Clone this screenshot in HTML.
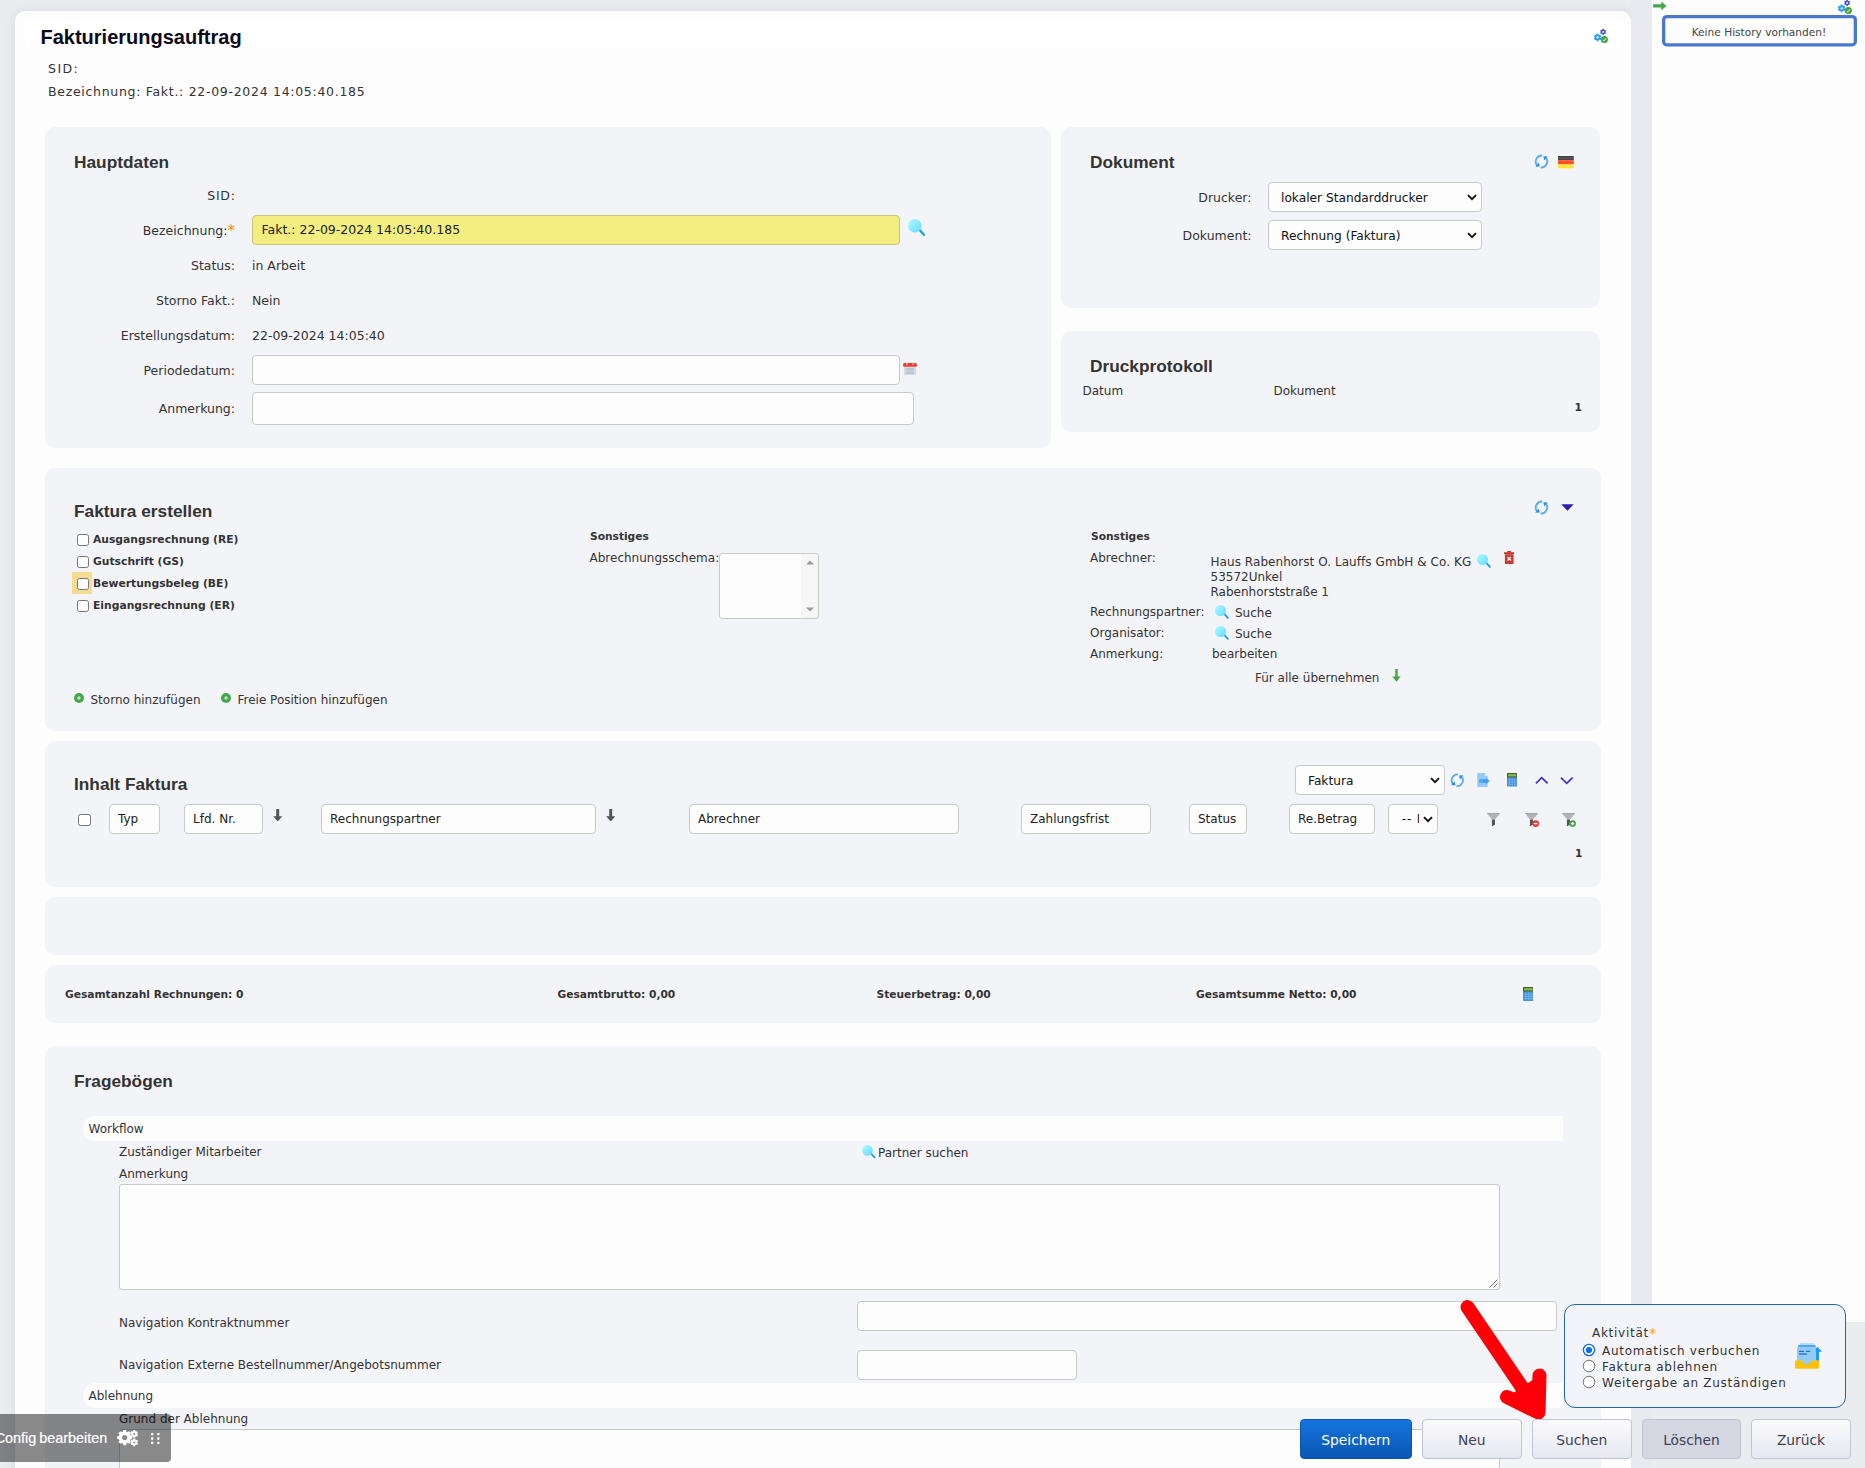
<!DOCTYPE html><html lang="de"><head><meta charset="utf-8"><title>Fakturierungsauftrag</title><style>
*{box-sizing:border-box;margin:0;padding:0}
html,body{width:1865px;height:1468px;overflow:hidden}
body{background:#ebecf0;font-family:"DejaVu Sans","Liberation Sans",sans-serif;color:#333;position:relative}
.b{position:absolute}
.t{position:absolute;white-space:nowrap;line-height:20px;height:20px}
.h{font-family:"Liberation Sans",sans-serif;font-weight:bold;color:#333}
.bd{font-weight:bold}
.main{background:#fdfdfd;border-radius:10px 10px 0 0;box-shadow:0 0 10px rgba(90,95,130,.13)}
.pn{background:#f3f4f8;border-radius:10px}
.in{background:#fdfdfd;border:1px solid #c9c9c9;border-radius:4px}
.cb{background:#fff;border:1px solid #767676;border-radius:2.5px}
.rd{background:#fff;border:1px solid #767676;border-radius:50%}
.btn{border:1px solid #c3c6d2;border-radius:4px;background:linear-gradient(#fbfbfd,#e6e8ef);color:#3d4252;text-align:center;font-size:13.8px;line-height:40px}
.bar{background:#fdfdfd;border-radius:12px 0 0 12px}
</style></head><body>
<div class="b " style="left:1652px;top:0px;width:213px;height:1322px;background:#fdfdfd"></div>
<div class="b " style="left:1631px;top:0px;width:21px;height:1468px;background:#e9eaef"></div>
<div class="b main" style="left:15px;top:11px;width:1616px;height:1469px;"></div>
<div class="b " style="left:25px;top:21px;width:1597px;height:28px;background:#fff;border-radius:4px"></div>
<div class="t h" style="left:40.5px;top:26.67px;font-size:20px;color:#0a0a1c">Fakturierungsauftrag</div>
<div class="t" style="left:48px;top:59.17px;font-size:12.5px;letter-spacing:1.45px">SID:</div>
<div class="t" style="left:48px;top:81.67px;font-size:12.5px;letter-spacing:.7px">Bezeichnung: Fakt.: 22-09-2024 14:05:40.185</div>
<svg class="b" style="left:1593px;top:28px;" width="16" height="16" viewBox="0 0 16 16"><path d="M3.54 6.54L3.79 5.52L5.49 5.52L5.74 6.54L6.50 6.98L7.51 6.69L8.36 8.16L7.61 8.89L7.61 9.77L8.36 10.50L7.51 11.97L6.50 11.68L5.74 12.12L5.49 13.14L3.79 13.14L3.54 12.12L2.78 11.68L1.77 11.97L0.92 10.50L1.67 9.77L1.67 8.89L0.92 8.16L1.77 6.69L2.78 6.98zM3.49 9.33a1.15 1.15 0 1 0 2.3 0a1.15 1.15 0 1 0 -2.3 0z" fill="#2f9df0" fill-rule="evenodd"/><path d="M9.22 1.65L9.42 0.85L10.78 0.85L10.98 1.65L11.59 2.00L12.38 1.78L13.06 2.95L12.47 3.53L12.47 4.23L13.06 4.81L12.38 5.98L11.59 5.76L10.98 6.11L10.78 6.91L9.42 6.91L9.22 6.11L8.61 5.76L7.82 5.98L7.14 4.81L7.73 4.23L7.73 3.53L7.14 2.95L7.82 1.78L8.61 2.00zM9.20 3.88a0.9 0.9 0 1 0 1.8 0a0.9 0.9 0 1 0 -1.8 0z" fill="#4a55c0" fill-rule="evenodd"/><circle cx="11.3" cy="11.5" r="3.6" fill="#43a047"/><path d="M9.700 11.800l1.200 1.100 2.100-2.600" fill="none" stroke="#b9e0b5" stroke-width="1.100"/></svg>
<svg class="b" style="left:1837px;top:-1.5px;" width="16" height="16" viewBox="0 0 16 16"><path d="M3.54 6.54L3.79 5.52L5.49 5.52L5.74 6.54L6.50 6.98L7.51 6.69L8.36 8.16L7.61 8.89L7.61 9.77L8.36 10.50L7.51 11.97L6.50 11.68L5.74 12.12L5.49 13.14L3.79 13.14L3.54 12.12L2.78 11.68L1.77 11.97L0.92 10.50L1.67 9.77L1.67 8.89L0.92 8.16L1.77 6.69L2.78 6.98zM3.49 9.33a1.15 1.15 0 1 0 2.3 0a1.15 1.15 0 1 0 -2.3 0z" fill="#2f9df0" fill-rule="evenodd"/><path d="M9.22 1.65L9.42 0.85L10.78 0.85L10.98 1.65L11.59 2.00L12.38 1.78L13.06 2.95L12.47 3.53L12.47 4.23L13.06 4.81L12.38 5.98L11.59 5.76L10.98 6.11L10.78 6.91L9.42 6.91L9.22 6.11L8.61 5.76L7.82 5.98L7.14 4.81L7.73 4.23L7.73 3.53L7.14 2.95L7.82 1.78L8.61 2.00zM9.20 3.88a0.9 0.9 0 1 0 1.8 0a0.9 0.9 0 1 0 -1.8 0z" fill="#4a55c0" fill-rule="evenodd"/><circle cx="11.3" cy="11.5" r="3.6" fill="#43a047"/><path d="M9.700 11.800l1.200 1.100 2.100-2.600" fill="none" stroke="#b9e0b5" stroke-width="1.100"/></svg>
<svg class="b" style="left:1653px;top:1px;" width="14" height="10" viewBox="0 0 14 10"><path d="M.6 3.300h7.700V.5L13.500 4.900 8.300 9.300V6.500H.6a.5 .5 0 0 1-.5-.5V3.800a.5 .5 0 0 1 .5-.5z" fill="#43a84a"/></svg>
<svg class="b" style="left:1661px;top:14px;" width="197" height="34" viewBox="0 0 197 34"><rect x="1" y=".9" width="195" height="31.600" rx="5" fill="#4a78d1"/><rect x="4.300" y="4.200" width="188.400" height="25" rx="1.500" fill="#fdfdfd"/></svg>
<div class="t" style="left:1691.7px;top:22.33px;font-size:10.6px;color:#444">Keine History vorhanden!</div>
<div class="b pn" style="left:45px;top:127px;width:1005.5px;height:320.5px;"></div>
<div class="t h" style="left:74px;top:151.51px;font-size:17.3px;">Hauptdaten</div>
<div class="t" style="right:1629.2px;top:185.67px;font-size:12.5px;letter-spacing:.8px">SID:</div>
<div class="t" style="right:1630px;top:220.67px;font-size:12.5px;">Bezeichnung:<span style="color:#ff8a00;font-size:15px;line-height:1;position:relative;top:1px">*</span></div>
<div class="t" style="right:1630px;top:255.67px;font-size:12.5px;">Status:</div>
<div class="t" style="right:1630px;top:290.67px;font-size:12.5px;">Storno Fakt.:</div>
<div class="t" style="right:1630px;top:325.67px;font-size:12.5px;">Erstellungsdatum:</div>
<div class="t" style="right:1630px;top:360.67px;font-size:12.5px;">Periodedatum:</div>
<div class="t" style="right:1630px;top:398.67px;font-size:12.5px;">Anmerkung:</div>
<div class="b in" style="left:252px;top:215px;width:648px;height:29.5px;background:#f4ee80;border-color:#c9c583"></div>
<div class="t" style="left:261.5px;top:220.17px;font-size:12.5px;color:#222">Fakt.: 22-09-2024 14:05:40.185</div>
<div class="t" style="left:252px;top:255.67px;font-size:12.5px;">in Arbeit</div>
<div class="t" style="left:252px;top:290.67px;font-size:12.5px;">Nein</div>
<div class="t" style="left:252px;top:325.67px;font-size:12.5px;">22-09-2024 14:05:40</div>
<div class="b in" style="left:252px;top:355px;width:648px;height:29.5px;"></div>
<div class="b in" style="left:252px;top:392px;width:662px;height:32.5px;"></div>
<svg class="b" style="left:908.4px;top:218.5px;" width="17.5" height="17.5" viewBox="0 0 17.5 17.5"><defs><linearGradient id="mg" x1="0" y1="0" x2="1" y2="1"><stop offset="0" stop-color="#b0fdff"/><stop offset="1" stop-color="#62d9ff"/></linearGradient></defs><path d="M11.400 10.800l4.500 5" stroke="#239be4" stroke-width="2.300" stroke-linecap="round"/><circle cx="6.800" cy="6.800" r="6.800" fill="url(#mg)"/></svg>
<svg class="b" style="left:903px;top:362px;" width="14" height="13" viewBox="0 -0.500 14 13"><path d="M.8 4.300h12.400v7a1.200 1.200 0 0 1-1.200 1.200H2a1.200 1.200 0 0 1-1.200-1.200z" fill="#d3dce3"/><path d="M.1 2a1.500 1.500 0 0 1 1.500-1.500h10.800a1.500 1.500 0 0 1 1.500 1.500v1.300a1 1 0 0 1-1 1H1.100a1 1 0 0 1-1-1z" fill="#f0392b"/><rect x="3.100" y="-.2" width="1.600" height="3" rx=".6" fill="#b9bcc4"/><rect x="9.400" y="-.2" width="1.600" height="3" rx=".6" fill="#b9bcc4"/><path d="M3.100 6.500h7.700M3.100 10.500h7.700" stroke="#9fb0bc" stroke-width="1.100"/><path d="M3.100 8.500h7.700" stroke="#b9c6cf" stroke-width="1.100"/></svg>
<div class="b pn" style="left:1061px;top:127px;width:539px;height:180.5px;"></div>
<div class="t h" style="left:1090px;top:151.51px;font-size:17.3px;">Dokument</div>
<svg class="b" style="left:1533.6px;top:154.4px;" width="15" height="15" viewBox="0 0 15 15"><g fill="none" stroke="#5fade8" stroke-width="1.900"><path d="M8.300 1.450A6.100 6.100 0 0 0 3.300 11.600"/><path d="M6.700 13.550A6.100 6.100 0 0 0 11.700 3.400"/></g><path d="M1.300 12.700l4.400-.2-1-4.100z" fill="#2b8ee0"/><path d="M13.700 2.300l-4.400.2 1 4.100z" fill="#2b8ee0"/></svg>
<svg class="b" style="left:1557.1px;top:154.8px;" width="17.8" height="14.4" viewBox="-1 -1 17.8 14.4"><defs><linearGradient id="fk" x1="0" y1="0" x2="0" y2="1"><stop offset="0" stop-color="#3a3a3a"/><stop offset=".5" stop-color="#5a5a5a"/><stop offset="1" stop-color="#3c3c3c"/></linearGradient></defs><rect x="-.6" y="-.6" width="17" height="13.600" rx="1" fill="#fafbfe"/><rect width="15.800" height="4.200" fill="url(#fk)"/><rect y="4.200" width="15.800" height="4.100" fill="#ff4f22"/><rect y="8.300" width="15.800" height="4.100" fill="#ffe23a"/></svg>
<div class="t" style="right:613.5px;top:187.67px;font-size:12.5px;">Drucker:</div>
<div class="t" style="right:613.5px;top:225.67px;font-size:12.5px;">Dokument:</div>
<div class="b in" style="left:1268px;top:182px;width:213.5px;height:29.5px;overflow:hidden"></div>
<div class="t" style="left:1281px;top:187.72px;font-size:12.2px;color:#111">lokaler Standarddrucker</div>
<svg class="b" style="left:1466.9px;top:193.75px;" width="10" height="7" viewBox="0 0 10 7"><path d="M1 1.2l4 4 4-4" fill="none" stroke="#111" stroke-width="1.9"/></svg>
<div class="b in" style="left:1268px;top:220px;width:213.5px;height:29.5px;overflow:hidden"></div>
<div class="t" style="left:1281px;top:225.72px;font-size:12.2px;color:#111">Rechnung (Faktura)</div>
<svg class="b" style="left:1466.9px;top:231.75px;" width="10" height="7" viewBox="0 0 10 7"><path d="M1 1.2l4 4 4-4" fill="none" stroke="#111" stroke-width="1.9"/></svg>
<div class="b pn" style="left:1061px;top:331px;width:539px;height:100.5px;"></div>
<div class="t h" style="left:1090px;top:355.51px;font-size:17.3px;">Druckprotokoll</div>
<div class="t" style="left:1082.5px;top:380.84px;font-size:12px;">Datum</div>
<div class="t" style="left:1273.5px;top:380.84px;font-size:12px;">Dokument</div>
<div class="t bd" style="left:1574.5px;top:398.31px;font-size:10.65px;">1</div>
<div class="b pn" style="left:45px;top:468px;width:1555.5px;height:262.5px;"></div>
<div class="t h" style="left:74px;top:500.51px;font-size:17.3px;">Faktura erstellen</div>
<div class="b " style="left:72px;top:572px;width:20px;height:22px;background:#f5dc90"></div>
<div class="b cb" style="left:76.5px;top:534px;width:12.5px;height:12px;"></div>
<div class="t bd" style="left:93px;top:530.08px;font-size:10.75px;">Ausgangsrechnung (RE)</div>
<div class="b cb" style="left:76.5px;top:556px;width:12.5px;height:12px;"></div>
<div class="t bd" style="left:93px;top:551.68px;font-size:10.75px;">Gutschrift (GS)</div>
<div class="b cb" style="left:76.5px;top:578px;width:12.5px;height:12px;"></div>
<div class="t bd" style="left:93px;top:573.68px;font-size:10.75px;">Bewertungsbeleg (BE)</div>
<div class="b cb" style="left:76.5px;top:600px;width:12.5px;height:12px;"></div>
<div class="t bd" style="left:93px;top:595.68px;font-size:10.75px;">Eingangsrechnung (ER)</div>
<div class="t bd" style="left:590px;top:527.31px;font-size:10.65px;">Sonstiges</div>
<div class="t" style="left:589.5px;top:547.84px;font-size:12px;">Abrechnungsschema:</div>
<div class="b in" style="left:719px;top:553px;width:100px;height:65.5px;border-radius:3px;overflow:hidden"><div class="b" style="right:0;top:0;width:17px;height:100%;background:#f6f6f7"></div><svg class="b" style="right:4.5px;top:6px" width="8" height="5" viewBox="0 0 8 5"><path d="M0 4.5L4 .5l4 4z" fill="#9a9a9a"/></svg><svg class="b" style="right:4.5px;bottom:6px" width="8" height="5" viewBox="0 0 8 5"><path d="M0 .5L4 4.5 8 .5z" fill="#9a9a9a"/></svg></div>
<svg class="b" style="left:74.1px;top:692.9px;" width="10" height="10" viewBox="0 0 10 10"><circle cx="5" cy="5" r="5" fill="#45a84c"/><path d="M5 3.300v3.400M3.300 5h3.400" stroke="#cfeacb" stroke-width="1.500"/></svg>
<div class="t" style="left:90.5px;top:690.34px;font-size:12px;">Storno hinzufügen</div>
<svg class="b" style="left:221px;top:692.9px;" width="10" height="10" viewBox="0 0 10 10"><circle cx="5" cy="5" r="5" fill="#45a84c"/><path d="M5 3.300v3.400M3.300 5h3.400" stroke="#cfeacb" stroke-width="1.500"/></svg>
<div class="t" style="left:237.5px;top:690.34px;font-size:12px;">Freie Position hinzufügen</div>
<svg class="b" style="left:1534px;top:499.5px;" width="15" height="15" viewBox="0 0 15 15"><g fill="none" stroke="#5fade8" stroke-width="1.900"><path d="M8.300 1.450A6.100 6.100 0 0 0 3.300 11.600"/><path d="M6.700 13.550A6.100 6.100 0 0 0 11.700 3.400"/></g><path d="M1.300 12.700l4.400-.2-1-4.100z" fill="#2b8ee0"/><path d="M13.700 2.300l-4.400.2 1 4.100z" fill="#2b8ee0"/></svg>
<svg class="b" style="left:1560.5px;top:503.5px;" width="13" height="7" viewBox="0 0 13 7"><path d="M.3 .3h12.4L6.5 6.8z" fill="#2a20b4"/></svg>
<div class="t bd" style="left:1091px;top:527.31px;font-size:10.65px;">Sonstiges</div>
<div class="t" style="left:1090px;top:548.34px;font-size:12px;">Abrechner:</div>
<div class="t" style="left:1210.5px;top:551.84px;font-size:12px;letter-spacing:.06px">Haus Rabenhorst O. Lauffs GmbH &amp; Co. KG</div>
<div class="t" style="left:1210.5px;top:566.84px;font-size:12px;">53572Unkel</div>
<div class="t" style="left:1210.5px;top:581.84px;font-size:12px;">Rabenhorststraße 1</div>
<svg class="b" style="left:1477.1px;top:554.2px;" width="14.2" height="14.2" viewBox="0 0 17.5 17.5"><defs><linearGradient id="mg" x1="0" y1="0" x2="1" y2="1"><stop offset="0" stop-color="#b0fdff"/><stop offset="1" stop-color="#62d9ff"/></linearGradient></defs><path d="M11.400 10.800l4.500 5" stroke="#239be4" stroke-width="2.300" stroke-linecap="round"/><circle cx="6.800" cy="6.800" r="6.800" fill="url(#mg)"/></svg>
<svg class="b" style="left:1503.8px;top:551.2px;" width="10.5" height="13.3" viewBox="0 0 10.500 13.300"><path d="M.9 3.200h8.700v8.800a1.300 1.300 0 0 1-1.300 1.300H2.200A1.300 1.300 0 0 1 .9 12z" fill="#c93a2c"/><rect x="0" y="1.200" width="10.500" height="1.700" rx=".4" fill="#b8352a"/><rect x="3.200" y="0" width="4" height="1.600" rx=".5" fill="#b8352a"/><path d="M3.400 6l3.600 3.600M7 6L3.400 9.600" stroke="#fff" stroke-width="1.300"/></svg>
<div class="t" style="left:1090px;top:601.84px;font-size:12px;">Rechnungspartner:</div>
<svg class="b" style="left:1214.7px;top:605px;" width="14.2" height="14.2" viewBox="0 0 17.5 17.5"><defs><linearGradient id="mg" x1="0" y1="0" x2="1" y2="1"><stop offset="0" stop-color="#b0fdff"/><stop offset="1" stop-color="#62d9ff"/></linearGradient></defs><path d="M11.400 10.800l4.500 5" stroke="#239be4" stroke-width="2.300" stroke-linecap="round"/><circle cx="6.800" cy="6.800" r="6.800" fill="url(#mg)"/></svg>
<div class="t" style="left:1235px;top:603.34px;font-size:12px;">Suche</div>
<div class="t" style="left:1090px;top:623.34px;font-size:12px;">Organisator:</div>
<svg class="b" style="left:1214.7px;top:626px;" width="14.2" height="14.2" viewBox="0 0 17.5 17.5"><defs><linearGradient id="mg" x1="0" y1="0" x2="1" y2="1"><stop offset="0" stop-color="#b0fdff"/><stop offset="1" stop-color="#62d9ff"/></linearGradient></defs><path d="M11.400 10.800l4.500 5" stroke="#239be4" stroke-width="2.300" stroke-linecap="round"/><circle cx="6.800" cy="6.800" r="6.800" fill="url(#mg)"/></svg>
<div class="t" style="left:1235px;top:624.34px;font-size:12px;">Suche</div>
<div class="t" style="left:1090px;top:644.34px;font-size:12px;">Anmerkung:</div>
<div class="t" style="left:1212px;top:644.34px;font-size:12px;">bearbeiten</div>
<div class="t" style="left:1255px;top:668.34px;font-size:12px;">Für alle übernehmen</div>
<svg class="b" style="left:1391.5px;top:668.5px;" width="9" height="13" viewBox="0 0 9 13"><path d="M3.3 0h2.4v7.6H8.6L4.5 12.8.4 7.6h2.9z" fill="#3fa648"/></svg>
<div class="b pn" style="left:45px;top:741px;width:1555.5px;height:145.5px;"></div>
<div class="t h" style="left:74px;top:774.01px;font-size:17.3px;">Inhalt Faktura</div>
<div class="b cb" style="left:78px;top:813.5px;width:12.5px;height:12.5px;"></div>
<div class="b in" style="left:109px;top:804px;width:51px;height:29.5px;"></div>
<div class="t" style="left:118px;top:808.69px;font-size:12px;color:#222">Typ</div>
<div class="b in" style="left:184px;top:804px;width:79px;height:29.5px;"></div>
<div class="t" style="left:193px;top:808.69px;font-size:12px;color:#222">Lfd. Nr.</div>
<div class="b in" style="left:321px;top:804px;width:275px;height:29.5px;"></div>
<div class="t" style="left:330px;top:808.69px;font-size:12px;color:#222">Rechnungspartner</div>
<div class="b in" style="left:689px;top:804px;width:269.5px;height:29.5px;"></div>
<div class="t" style="left:698px;top:808.69px;font-size:12px;color:#222">Abrechner</div>
<div class="b in" style="left:1021px;top:804px;width:129.5px;height:29.5px;"></div>
<div class="t" style="left:1030px;top:808.69px;font-size:12px;color:#222">Zahlungsfrist</div>
<div class="b in" style="left:1189px;top:804px;width:57.5px;height:29.5px;"></div>
<div class="t" style="left:1198px;top:808.69px;font-size:12px;color:#222">Status</div>
<div class="b in" style="left:1289px;top:804px;width:85.5px;height:29.5px;"></div>
<div class="t" style="left:1298px;top:808.69px;font-size:12px;color:#222">Re.Betrag</div>
<svg class="b" style="left:273px;top:808.5px;" width="9.5" height="12.6" viewBox="0 0 9.5 12.6"><path d="M3.2 0h3v7.2h3L4.7 12.6.2 7.2h3z" fill="#555"/></svg>
<svg class="b" style="left:606px;top:808.5px;" width="9.5" height="12.6" viewBox="0 0 9.5 12.6"><path d="M3.2 0h3v7.2h3L4.7 12.6.2 7.2h3z" fill="#555"/></svg>
<div class="b in" style="left:1295px;top:765px;width:150px;height:29.5px;overflow:hidden"></div>
<div class="t" style="left:1308px;top:770.72px;font-size:12.2px;color:#111">Faktura</div>
<svg class="b" style="left:1430.4px;top:776.75px;" width="10" height="7" viewBox="0 0 10 7"><path d="M1 1.2l4 4 4-4" fill="none" stroke="#111" stroke-width="1.9"/></svg>
<div class="b in" style="left:1388px;top:804px;width:49.5px;height:29.5px;overflow:hidden"></div>
<div class="t" style="left:1401.7px;top:809.37px;font-size:12.2px;color:#111;width:17.6px;overflow:hidden;letter-spacing:.8px">-- F</div>
<svg class="b" style="left:1422.8px;top:816px;" width="10" height="7" viewBox="0 0 10 7"><path d="M1 1.2l4 4 4-4" fill="none" stroke="#111" stroke-width="1.9"/></svg>
<svg class="b" style="left:1449.6px;top:772.6px;" width="14.6" height="14.6" viewBox="0 0 15 15"><g fill="none" stroke="#5fade8" stroke-width="1.900"><path d="M8.300 1.450A6.100 6.100 0 0 0 3.300 11.600"/><path d="M6.700 13.550A6.100 6.100 0 0 0 11.700 3.400"/></g><path d="M1.300 12.700l4.400-.2-1-4.100z" fill="#2b8ee0"/><path d="M13.700 2.300l-4.400.2 1 4.100z" fill="#2b8ee0"/></svg>
<svg class="b" style="left:1476.5px;top:772.9px;" width="13" height="14.1" viewBox="0 0 13 14.100"><path d="M.3 0h7.400l3 3v11.100H.3z" fill="#93caf9"/><path d="M7.700 0l3 3h-3z" fill="#cfe7fc"/><path d="M2.500 6.200h6.500V5l3.800 3.100L9 11.200V10H2.500z" fill="#3d9df2"/><rect x="2.500" y="6.200" width="3.500" height="3.800" fill="#5aa9f0"/></svg>
<svg class="b" style="left:1506.8px;top:773.3px;" width="10.4" height="13.5" viewBox="0 0 10.400 13.500"><rect x="0" y="0" width="10.400" height="13.500" rx="1" fill="#3d8fe0"/><path d="M0 1a1 1 0 0 1 1-1h8.400a1 1 0 0 1 1 1v3.400H0z" fill="#4d5a3a"/><rect x="1.100" y="1.100" width="8.200" height="2.300" fill="#7ec142"/><path d="M2.700 4.800v8.200M5.200 4.800v8.200M7.700 4.800v8.200M.6 6.900h9.200M.6 9.100h9.200M.6 11.300h9.200" stroke="#7db5ec" stroke-width=".7"/><rect x="8.200" y="5.200" width=".9" height="1.300" fill="#e05a5a"/></svg>
<svg class="b" style="left:1535.2px;top:775.8px;" width="13.5" height="8" viewBox="0 0 13.5 8"><path d="M.9 7.300l5.850-5.700L12.600 7.300" fill="none" stroke="#3a32c8" stroke-width="1.700"/></svg>
<svg class="b" style="left:1560.2px;top:776.9px;" width="13.5" height="8" viewBox="0 0 13.5 8"><path d="M.9 .7l5.850 5.700L12.600 .7" fill="none" stroke="#3a32c8" stroke-width="1.700"/></svg>
<svg class="b" style="left:1486.6px;top:812.5px;" width="13" height="14" viewBox="0 0 13 14"><path d="M0 .2h12.800v.9L7.800 6.600H5z" fill="#b4b4b4"/><path d="M0 .2h12.800v.9H0z" fill="#a2a2a2"/><path d="M4.900 6.400h3.100v5.300l-3.100 1.500z" fill="#575757"/></svg>
<svg class="b" style="left:1524.5px;top:812.5px;" width="16" height="15" viewBox="0 0 16 15"><path d="M0 .2h12.800v.9L7.800 6.600H5z" fill="#b4b4b4"/><path d="M0 .2h12.800v.9H0z" fill="#a2a2a2"/><path d="M4.900 6.400h3.100v5.300l-3.100 1.500z" fill="#575757"/><circle cx="10.700" cy="10.600" r="3.400" fill="#f03a2e"/><path d="M8.800 10.600h3.800" stroke="#fff" stroke-width="1.300"/></svg>
<svg class="b" style="left:1561.5px;top:812.5px;" width="16" height="15" viewBox="0 0 16 15"><path d="M0 .2h12.800v.9L7.800 6.600H5z" fill="#b4b4b4"/><path d="M0 .2h12.800v.9H0z" fill="#a2a2a2"/><path d="M4.900 6.400h3.100v5.300l-3.100 1.500z" fill="#575757"/><circle cx="10.600" cy="10.600" r="3.400" fill="#45a84c"/><path d="M8.900 10.600h3.400M10.600 8.900v3.400" stroke="#e4f3e2" stroke-width="1.400"/></svg>
<div class="t bd" style="left:1575px;top:843.81px;font-size:10.65px;">1</div>
<div class="b pn" style="left:45px;top:897px;width:1555.5px;height:57.5px;"></div>
<div class="b pn" style="left:45px;top:965px;width:1555.5px;height:58px;"></div>
<div class="t bd" style="left:65px;top:984.81px;font-size:10.65px;">Gesamtanzahl Rechnungen: 0</div>
<div class="t bd" style="left:557.5px;top:984.81px;font-size:10.65px;">Gesamtbrutto: 0,00</div>
<div class="t bd" style="left:876.5px;top:984.81px;font-size:10.65px;">Steuerbetrag: 0,00</div>
<div class="t bd" style="left:1196px;top:984.81px;font-size:10.65px;">Gesamtsumme Netto: 0,00</div>
<svg class="b" style="left:1522.5px;top:986.8px;" width="10.8" height="14" viewBox="0 0 10.400 13.500"><rect x="0" y="0" width="10.400" height="13.500" rx="1" fill="#3d8fe0"/><path d="M0 1a1 1 0 0 1 1-1h8.400a1 1 0 0 1 1 1v3.400H0z" fill="#4d5a3a"/><rect x="1.100" y="1.100" width="8.200" height="2.300" fill="#7ec142"/><path d="M2.700 4.800v8.200M5.200 4.800v8.200M7.700 4.800v8.200M.6 6.900h9.200M.6 9.100h9.200M.6 11.300h9.200" stroke="#7db5ec" stroke-width=".7"/><rect x="8.200" y="5.200" width=".9" height="1.300" fill="#e05a5a"/></svg>
<div class="b pn" style="left:45px;top:1046px;width:1555.5px;height:434px;"></div>
<div class="t h" style="left:74px;top:1070.51px;font-size:17.3px;">Fragebögen</div>
<div class="b bar" style="left:83px;top:1116px;width:1480px;height:25px;"></div>
<div class="t" style="left:88.5px;top:1119.34px;font-size:12px;">Workflow</div>
<div class="t" style="left:119px;top:1141.84px;font-size:12px;">Zuständiger Mitarbeiter</div>
<svg class="b" style="left:862px;top:1145.3px;" width="13.8" height="13.8" viewBox="0 0 17.5 17.5"><defs><linearGradient id="mg" x1="0" y1="0" x2="1" y2="1"><stop offset="0" stop-color="#b0fdff"/><stop offset="1" stop-color="#62d9ff"/></linearGradient></defs><path d="M11.400 10.800l4.500 5" stroke="#239be4" stroke-width="2.300" stroke-linecap="round"/><circle cx="6.800" cy="6.800" r="6.800" fill="url(#mg)"/></svg>
<div class="t" style="left:878px;top:1143.34px;font-size:12px;">Partner suchen</div>
<div class="t" style="left:119px;top:1163.84px;font-size:12px;">Anmerkung</div>
<div class="b in" style="left:119px;top:1184px;width:1380.5px;height:105.5px;border-radius:3px"><svg class="b" style="right:1px;bottom:1px" width="10" height="10" viewBox="0 0 10 10"><path d="M9.5 1.5l-8 8M9.5 5.5l-4 4" stroke="#777" stroke-width="1"/></svg></div>
<div class="t" style="left:119px;top:1312.84px;font-size:12px;">Navigation Kontraktnummer</div>
<div class="b in" style="left:857px;top:1301px;width:699.5px;height:29.5px;"></div>
<div class="t" style="left:119px;top:1354.84px;font-size:12px;">Navigation Externe Bestellnummer/Angebotsnummer</div>
<div class="b in" style="left:857px;top:1350px;width:219.5px;height:29.5px;"></div>
<div class="b bar" style="left:83px;top:1383px;width:1480px;height:25px;"></div>
<div class="t" style="left:88.5px;top:1385.84px;font-size:12px;">Ablehnung</div>
<div class="t" style="left:119px;top:1408.84px;font-size:12px;">Grund der Ablehnung</div>
<div class="b in" style="left:119px;top:1429px;width:1380.5px;height:71px;border-radius:3px"></div>
<div class="b " style="left:1631px;top:1322px;width:234px;height:146px;background:#ebecf0"></div>
<div class="b " style="left:1631px;top:0px;width:21px;height:1468px;background:#e9eaef"></div>
<div class="b " style="left:1564px;top:1304px;width:282px;height:104px;background:#f3f4f9;border:1.5px solid #1f66b6;border-radius:11px"></div>
<div class="t" style="left:1592px;top:1323.34px;font-size:12px;letter-spacing:.72px">Aktivität<span style="color:#ffa21a;font-size:14.5px;line-height:1;position:relative;top:1px;letter-spacing:0">*</span></div>
<svg class="b" style="left:1581.5px;top:1342.5px;" width="14" height="14" viewBox="0 0 14 14"><circle cx="7" cy="7" r="5.600" fill="#fff" stroke="#0b6cf4" stroke-width="1.400"/><circle cx="7" cy="7" r="3.100" fill="#0b6cf4"/></svg>
<div class="t" style="left:1602px;top:1341.34px;font-size:12px;letter-spacing:.72px">Automatisch verbuchen</div>
<svg class="b" style="left:1581.5px;top:1359px;" width="14" height="14" viewBox="0 0 14 14"><circle cx="7" cy="7" r="5.800" fill="#fff" stroke="#767676" stroke-width="1"/></svg>
<div class="t" style="left:1602px;top:1357.34px;font-size:12px;letter-spacing:.72px">Faktura ablehnen</div>
<svg class="b" style="left:1581.5px;top:1375.2px;" width="14" height="14" viewBox="0 0 14 14"><circle cx="7" cy="7" r="5.800" fill="#fff" stroke="#767676" stroke-width="1"/></svg>
<div class="t" style="left:1602px;top:1373.34px;font-size:12px;letter-spacing:.72px">Weitergabe an Zuständigen</div>
<svg class="b" style="left:1795px;top:1342px;" width="27" height="27" viewBox="0 0 27 27"><path d="M22.300 4.700L27 9.800h-3V19h-3.200V9.800H18z" fill="#2196f3"/><path d="M0 19.800a1.500 1.500 0 0 1 1.500-1.500h21a1.500 1.500 0 0 1 1.500 1.500v5.500a1.500 1.500 0 0 1-1.500 1.500h-21A1.500 1.500 0 0 1 0 25.300z" fill="#ffc107"/><rect x="4.900" y=".9" width="14.100" height="2.500" rx=".6" fill="#b9dcfa"/><rect x="3" y="3" width="17.800" height="3" rx="1" fill="#4aa8f5"/><path d="M2 6a1 1 0 0 1 1-1h16.800a1 1 0 0 1 1 1v12.600h-5.100a3.900 3.900 0 0 1-7.800 0H2z" fill="#92caf8"/><path d="M4 9.300h4.800M11 9.300h4.100" stroke="#1f6fd0" stroke-width="1.200"/><path d="M4 12h7.900" stroke="#3a8ae0" stroke-width="1.800"/></svg>
<svg class="b" style="left:1450px;top:1289px;" width="110" height="140" viewBox="0 0 110 140"><g fill="none" stroke="#fb0007" stroke-width="14" stroke-linecap="round" stroke-linejoin="round"><path d="M17.5 18L88 122"/><path d="M57 108l31.500 15.500 1-37"/></g><path d="M57 108l31.500 15.500 1-37z" fill="#fb0007"/></svg>
<div class="b btn" style="left:1300px;top:1418.5px;width:111.5px;height:40.0px;background:linear-gradient(#1675dc,#0a56b4);border-color:#0a56b4;color:#fff">Speichern</div>
<div class="b btn" style="left:1422px;top:1418.5px;width:99.5px;height:40.0px;">Neu</div>
<div class="b btn" style="left:1532px;top:1418.5px;width:99.5px;height:40.0px;">Suchen</div>
<div class="b btn" style="left:1642px;top:1418.5px;width:99px;height:40.0px;background:#d4d7e1;border-color:#bfc3d0">Löschen</div>
<div class="b btn" style="left:1751px;top:1418.5px;width:100px;height:40.0px;">Zurück</div>
<div class="b " style="left:-10px;top:1414px;width:181px;height:48px;background:rgba(0,0,0,.46);border-radius:0 4px 4px 0"></div>
<div class="t" style="right:1757.7px;top:1427.71px;font-size:14.4px;font-family:'Liberation Sans',sans-serif;color:#fff;-webkit-text-stroke:.2px #fff;word-spacing:-1px">Config bearbeiten</div>
<svg class="b" style="left:117px;top:1430px;" width="22" height="17" viewBox="0 0 22 17"><path d="M6.00 1.74L6.44 0.00L8.96 0.00L9.40 1.74L10.64 2.25L12.18 1.34L13.96 3.12L13.05 4.66L13.56 5.90L15.30 6.34L15.30 8.86L13.56 9.30L13.05 10.54L13.96 12.08L12.18 13.86L10.64 12.95L9.40 13.46L8.96 15.20L6.44 15.20L6.00 13.46L4.76 12.95L3.22 13.86L1.44 12.08L2.35 10.54L1.84 9.30L0.10 8.86L0.10 6.34L1.84 5.90L2.35 4.66L1.44 3.12L3.22 1.34L4.76 2.25zM5.10 7.60a2.6 2.6 0 1 0 5.2 0a2.6 2.6 0 1 0 -5.2 0z" fill="#fff" fill-rule="evenodd"/><path d="M16.20 1.11L16.45 0.09L18.15 0.09L18.40 1.11L19.16 1.55L20.17 1.26L21.02 2.73L20.27 3.46L20.27 4.34L21.02 5.07L20.17 6.54L19.16 6.25L18.40 6.69L18.15 7.71L16.45 7.71L16.20 6.69L15.44 6.25L14.43 6.54L13.58 5.07L14.33 4.34L14.33 3.46L13.58 2.73L14.43 1.26L15.44 1.55zM16.30 3.90a1.0 1.0 0 1 0 2.0 0a1.0 1.0 0 1 0 -2.0 0z" fill="#fff" fill-rule="evenodd"/><path d="M16.20 9.61L16.45 8.59L18.15 8.59L18.40 9.61L19.16 10.05L20.17 9.76L21.02 11.23L20.27 11.96L20.27 12.84L21.02 13.57L20.17 15.04L19.16 14.75L18.40 15.19L18.15 16.21L16.45 16.21L16.20 15.19L15.44 14.75L14.43 15.04L13.58 13.57L14.33 12.84L14.33 11.96L13.58 11.23L14.43 9.76L15.44 10.05zM16.30 12.40a1.0 1.0 0 1 0 2.0 0a1.0 1.0 0 1 0 -2.0 0z" fill="#fff" fill-rule="evenodd"/></svg>
<svg class="b" style="left:150.5px;top:1432.5px;" width="9" height="12" viewBox="0 0 9 12"><g fill="#fff"><rect x="0" y="0" width="2.300" height="2.300" rx=".4"/><rect x="6.200" y="0" width="2.300" height="2.300" rx=".4"/><rect x="0" y="4.350" width="2.300" height="2.300" rx=".4"/><rect x="6.200" y="4.350" width="2.300" height="2.300" rx=".4"/><rect x="0" y="8.700" width="2.300" height="2.300" rx=".4"/><rect x="6.200" y="8.700" width="2.300" height="2.300" rx=".4"/></g></svg>
</body></html>
